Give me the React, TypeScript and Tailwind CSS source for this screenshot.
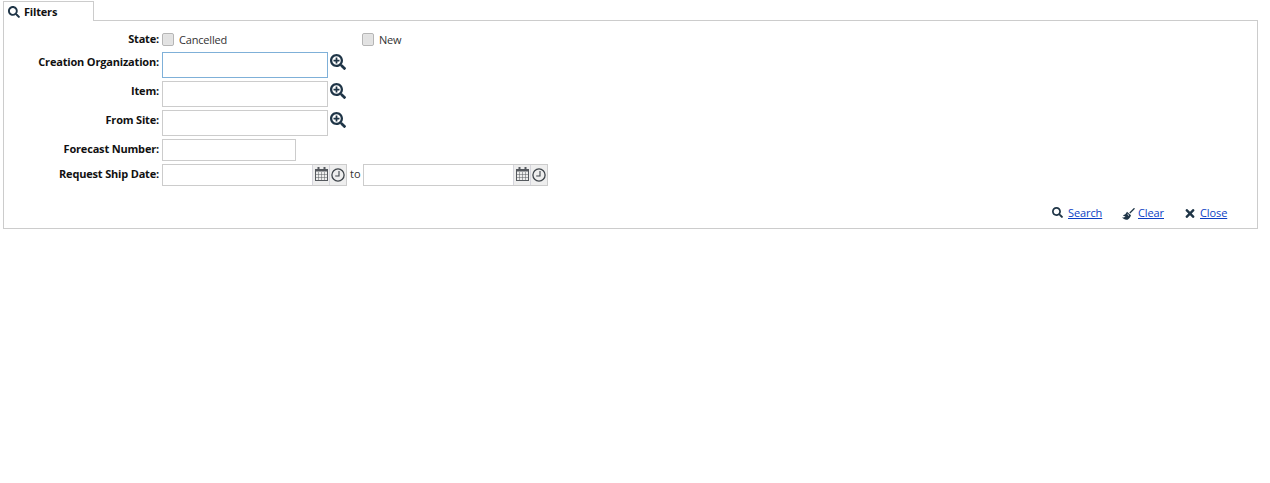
import { FaSearch, FaSearchPlus, FaTimes } from "react-icons/fa";

const font = { fontFamily: '"Open Sans", sans-serif' };

const CalendarIcon = () => (
    <svg width="13" height="14" viewBox="0 0 13 14" className="-mt-[2px] text-[#55595e]">
        <rect x="0.5" y="2.5" width="12" height="11" fill="none" stroke="currentColor" />
        <rect x="0.5" y="2" width="12" height="2.5" fill="currentColor" />
        <rect x="2.5" y="0" width="2" height="3" fill="currentColor" />
        <rect x="8.5" y="0" width="2" height="3" fill="currentColor" />
        <path d="M3.5 5v8M6.5 5v8M9.5 5v8M1 7.500h11M1 10.500h11" stroke="currentColor" strokeWidth="1" fill="none" opacity="0.5" />
    </svg>
);

const ClockIcon = () => (
    <svg width="14" height="14" viewBox="0 0 14 14" className="-mt-px text-[#3f454b]">
        <circle cx="7" cy="7" r="6.100" fill="none" stroke="currentColor" strokeWidth="1.300" />
        <path d="M8 3v5H4.200" fill="none" stroke="currentColor" strokeWidth="1.100" />
    </svg>
);

const BroomIcon = () => (
    <svg width="13" height="12" viewBox="0 0 13 12" className="-mr-[2px] mt-[2px] text-[#1f3547]">
        <path d="M12.500 0.300 7.800 5" stroke="currentColor" strokeWidth="1.300" fill="none" />
        <path d="M5 3.800 9 7.300C8.300 9.500 7 11 5.500 11.800 3.500 11.800 1.500 11 0 9.500 1.500 9.700 2.800 9.200 3.500 8.300 2.500 8.200 1.500 7.800 1 7.200 2.800 7 4 5.800 5 3.800Z" fill="currentColor" />
        <path d="M5.500 6.200 7 7.500" stroke="#fff" strokeWidth="1" fill="none" />
    </svg>
);

const Label = ({ text }: { text: string }) => (
    <label className="block w-[159px] shrink-0 whitespace-nowrap text-right text-[11px] font-bold leading-[15px] tracking-[-0.18px] text-[#111]">{text}:</label>
);

const LookupRow = ({ label, focused }: { label: string; focused?: boolean }) => (
    <div className="flex items-start">
        <div className="mt-[2px] shrink-0">
            <Label text={label} />
        </div>
        <input
            className={`ml-[3px] h-[26px] w-[166px] border bg-white outline-none ${
                focused ? "border-[#7fb0d8]" : "border-[#ccc]"
            }`}
        />
        <FaSearchPlus className="ml-[2px] mt-[2px] h-[16px] w-[16px] text-[#1f3547]" />
    </div>
);

const Check = ({ text, className }: { text: string; className: string }) => (
    <span className={`flex items-center ${className}`}>
        <span className="h-[13px] w-[12px] rounded-[2px] border border-[#b5b5b5] bg-[#e2e2e2] shadow-[inset_0_0_1px_#fff]"></span>
        <span className="ml-[5px] text-[11px] leading-[15px] tracking-[-0.18px] text-[#333]">{text}</span>
    </span>
);

const DateInput = () => (
    <div className="flex h-[22px] w-[185px] border border-[#ccc] bg-white">
        <input className="min-w-0 flex-1 bg-white outline-none" />
        <span className="flex w-[17px] items-center justify-center border-l border-[#d5d5dc] bg-[#eee]">
            <CalendarIcon />
        </span>
        <span className="flex w-[17px] items-center justify-center border-l border-[#d5d5dc] bg-[#eee]">
            <ClockIcon />
        </span>
    </div>
);

const Action = ({ icon, text, className }: { icon: React.ReactNode; text: string; className: string }) => (
    <span className={`flex items-center ${className}`}>
        {icon}
        <a href="#" className="ml-[5px] text-[11px] leading-[15px] tracking-[-0.1px] text-[#0b3fc4] underline">
            {text}
        </a>
    </span>
);

export default function App() {
    return (
        <div className="h-[483px] w-[1270px] bg-white pl-[3px] pt-px" style={font}>
            <div className="relative z-10 -mb-px flex h-[20px] w-[91px] items-center border border-b-0 border-[#ccc] bg-white pl-[4px]">
                <FaSearch className="h-[12px] w-[12px] text-[#1f3547]" />
                <span className="ml-[4px] text-[11px] font-bold leading-[15px] tracking-[-0.18px] text-[#111]">Filters</span>
            </div>
            <div className="flex h-[209px] w-[1255px] flex-col border border-[#ccc] bg-white">
                <div className="ml-[-4px] flex flex-col pt-[10px]">
                    <div className="flex h-[17px] items-start">
                        <Label text="State" />
                        <div className="ml-[3px] mt-[1px] flex">
                            <Check text="Cancelled" className="w-[200px]" />
                            <Check text="New" className="" />
                        </div>
                    </div>
                    <div className="mt-[4px] flex flex-col gap-[3px]">
                        <LookupRow label="Creation Organization" focused />
                        <LookupRow label="Item" />
                        <LookupRow label="From Site" />
                    </div>
                    <div className="mt-[3px] flex items-start">
                        <div className="mt-[2px] shrink-0">
                            <Label text="Forecast Number" />
                        </div>
                        <input className="ml-[3px] h-[22px] w-[134px] border border-[#ccc] bg-white outline-none" />
                    </div>
                    <div className="mt-[3px] flex items-start">
                        <div className="mt-[2px] shrink-0">
                            <Label text="Request Ship Date" />
                        </div>
                        <div className="ml-[3px] flex items-start">
                            <DateInput />
                            <span className="mx-[3px] mt-[2px] w-[10px] text-[11px] leading-[15px] text-[#333]">to</span>
                            <DateInput />
                        </div>
                    </div>
                </div>
                <div className="mt-[19px] flex items-center pl-[1048px]">
                    <Action icon={<FaSearch className="h-[11px] w-[11px] text-[#1f3547]" />} text="Search" className="w-[70px]" />
                    <Action icon={<BroomIcon />} text="Clear" className="w-[63px]" />
                    <Action icon={<FaTimes className="mt-[2px] h-[13px] w-[10px] text-[#1f3547]" />} text="Close" className="" />
                </div>
            </div>
        </div>
    );
}
